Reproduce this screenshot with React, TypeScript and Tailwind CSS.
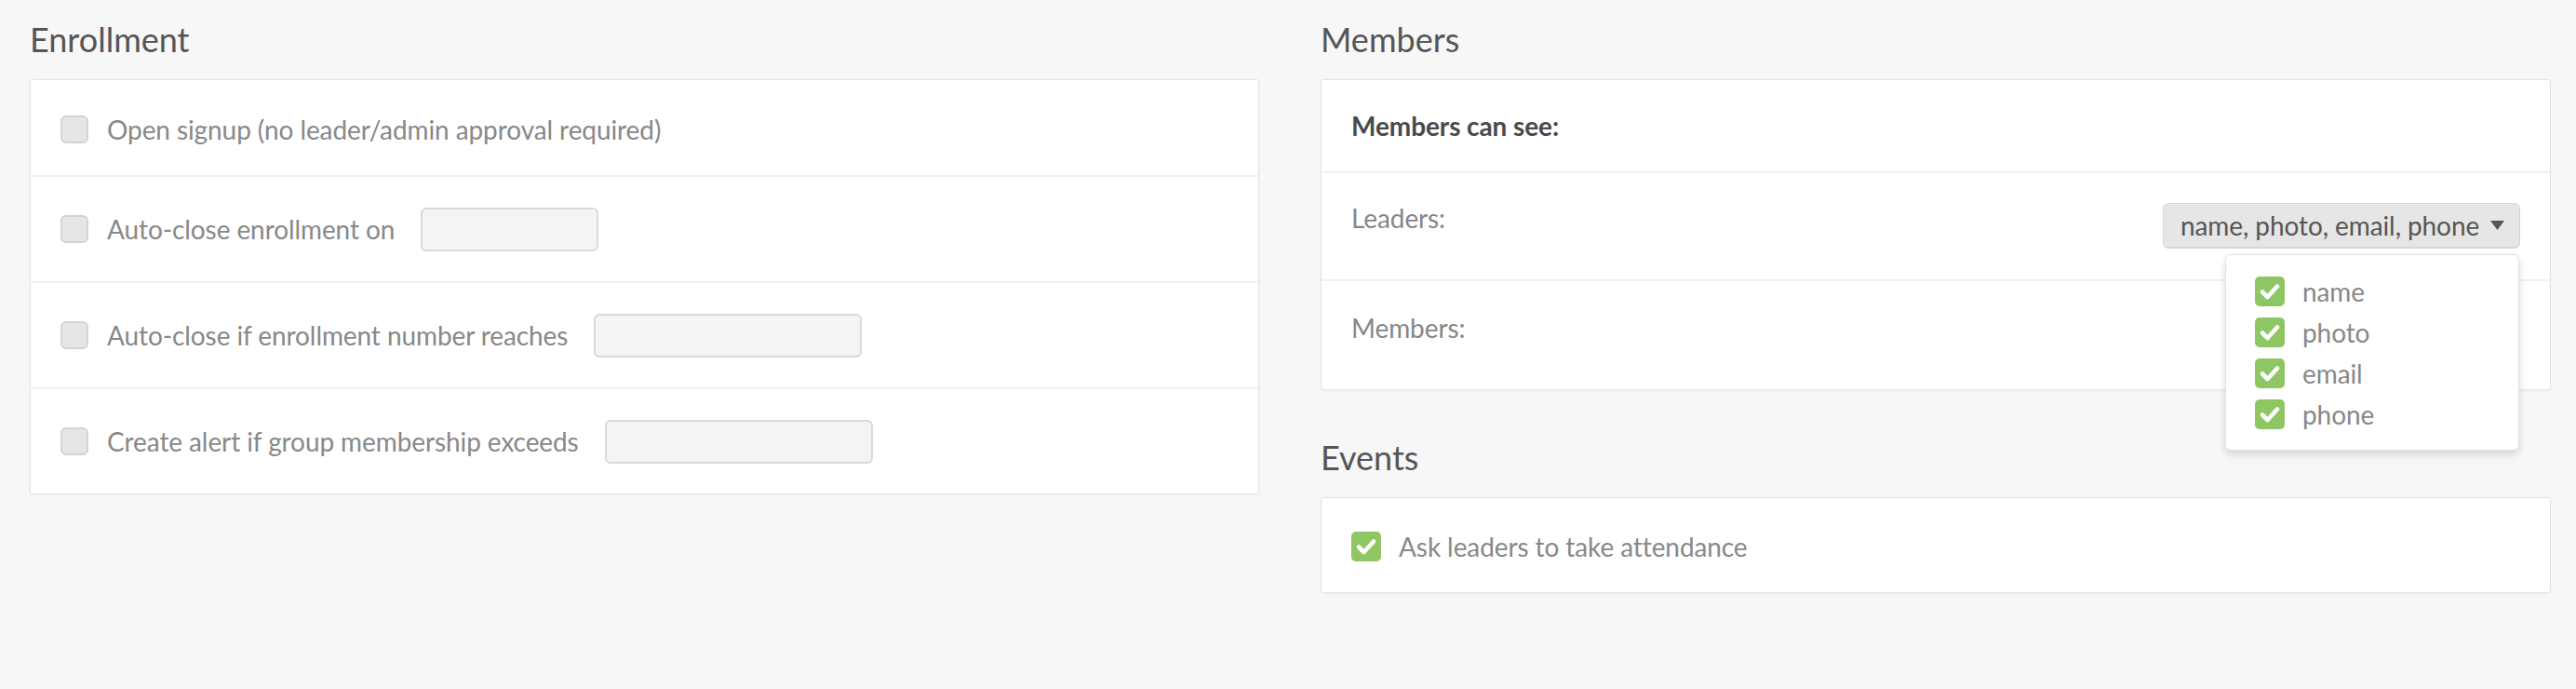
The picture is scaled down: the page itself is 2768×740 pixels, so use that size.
function Box({ checked = false }: { checked?: boolean }) {
  if (checked) {
    return (
      <span className="flex h-[32px] w-[32px] shrink-0 items-center justify-center rounded-[5px] bg-[#8dc663]">
        <svg width="32" height="32" viewBox="0 0 32 32" fill="none">
          <path d="M8 16.5 L13.5 22 L24 10.5" stroke="#fff" strokeWidth="4.6" strokeLinecap="round" strokeLinejoin="round" />
        </svg>
      </span>
    );
  }
  return <span className="block h-[30px] w-[30px] shrink-0 rounded-[6px] border-2 border-[#d3d3d3] bg-[#e6e6e6]" />;
}

function Field({ width }: { width: string }) {
  return <span className={`block h-[47px] rounded-[6px] border-2 border-[#d9d9d9] bg-[#f4f4f4] ${width}`} />;
}

const enrollRows = [
  { label: 'Auto-close enrollment on', width: 'w-[191px]' },
  { label: 'Auto-close if enrollment number reaches', width: 'w-[288px]' },
  { label: 'Create alert if group membership exceeds', width: 'w-[288px]' },
];

const fields = ['name', 'photo', 'email', 'phone'];

export default function App() {
  return (
    <div className="h-[740px] w-full bg-[#f7f7f7] pl-[32px] pt-[21px] font-[Lato,sans-serif] text-[28px] tracking-[-0.09px] text-[#888]">
      <div className="flex gap-[66px]">
        {/* Enrollment */}
        <div className="w-[1321px]">
          <h2 className="mb-[21px] text-[36px] leading-[43px] font-normal tracking-normal text-[#555]">Enrollment</h2>
          <div className="rounded-[3px] border border-[#e4e4e4] bg-white shadow-[0_1px_3px_rgba(0,0,0,0.05)]">
            <div className="flex h-[102px] items-center gap-[20px] px-[32px] pt-[4px]">
              <Box />
              <span className="leading-[38px]">Open signup (no leader/admin approval required)</span>
            </div>
            {enrollRows.map((row) => (
              <div key={row.label} className="flex h-[114px] items-center border-t-2 border-[#f1f1f1] px-[32px]">
                <Box />
                <span className="ml-[20px] leading-[38px]">{row.label}</span>
                <span className="ml-[28px]">
                  <Field width={row.width} />
                </span>
              </div>
            ))}
          </div>
        </div>

        {/* Members + Events */}
        <div className="w-[1322px]">
          <h2 className="mb-[21px] text-[36px] leading-[43px] font-normal tracking-normal text-[#555]">Members</h2>
          <div className="rounded-[3px] border border-[#e4e4e4] bg-white shadow-[0_1px_3px_rgba(0,0,0,0.05)]">
            <div className="flex h-[98px] items-center px-[32px]">
              <span className="font-bold leading-[38px] text-[#4a4a4a]">Members can see:</span>
            </div>
            <div className="flex h-[116px] items-start justify-between border-t-2 border-[#f1f1f1] px-[32px] pt-[29px]">
              <span className="leading-[38px] text-[#868686]">Leaders:</span>
              <div className="relative mt-[3px]">
                <div className="flex h-[49px] w-[384px] items-center rounded-[6px] border border-b-2 border-[#d6d6d6] bg-[#e6e6e6] pl-[18px] pr-[16px] text-[#555]">
                  <span className="leading-[38px]">name, photo, email, phone</span>
                  <svg className="ml-auto" width="15" height="10" viewBox="0 0 15 10">
                    <polygon points="0,0 15,0 7.5,10" fill="#555" />
                  </svg>
                </div>
                <div className="absolute right-[1px] top-[55px] z-10 w-[316px] rounded-[6px] border border-[#e2e2e2] bg-white pb-[16px] pl-[31px] pt-[17px] shadow-[0_4px_8px_rgba(0,0,0,0.14)]">
                  {fields.map((f) => (
                    <div key={f} className="flex h-[44px] items-center gap-[19px]">
                      <Box checked />
                      <span className="leading-[38px]">{f}</span>
                    </div>
                  ))}
                </div>
              </div>
            </div>
            <div className="flex h-[118px] items-start border-t-2 border-[#f1f1f1] px-[32px] pt-[31px]">
              <span className="leading-[38px] text-[#868686]">Members:</span>
            </div>
          </div>

          <h2 className="mb-[21px] mt-[51px] text-[36px] leading-[43px] font-normal tracking-normal text-[#555]">Events</h2>
          <div className="rounded-[3px] border border-[#e4e4e4] bg-white shadow-[0_1px_3px_rgba(0,0,0,0.05)]">
            <div className="flex h-[101px] items-center gap-[19px] px-[32px] pt-[3px]">
              <Box checked />
              <span className="leading-[38px]">Ask leaders to take attendance</span>
            </div>
          </div>
        </div>
      </div>
    </div>
  );
}
